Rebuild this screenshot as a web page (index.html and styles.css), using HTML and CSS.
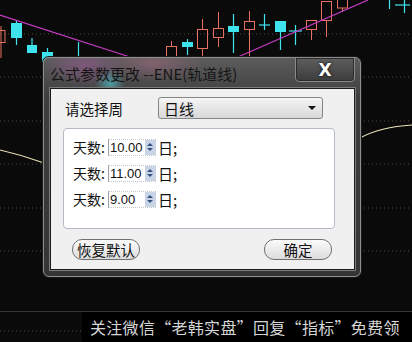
FILE: index.html
```html
<!DOCTYPE html>
<html lang="zh-CN">
<head>
  <meta charset="UTF-8">
  <title>公式参数更改</title>
  <link rel="stylesheet" href="styles.css">
</head>
<body>
  <div class="stage">
    <!-- K线背景 -->
    <svg class="chart" width="412" height="342" viewBox="0 0 412 342">
      <g class="grid">
        <line x1="0" y1="34" x2="412" y2="34"/>
        <line x1="0" y1="77" x2="412" y2="77"/>
        <line x1="0" y1="121" x2="412" y2="121"/>
        <line x1="0" y1="164" x2="412" y2="164"/>
        <line x1="0" y1="208" x2="412" y2="208"/>
        <line x1="0" y1="251" x2="412" y2="251"/>
        <line x1="0" y1="331" x2="82" y2="331"/>
      </g>
      <line x1="0" y1="311.5" x2="412" y2="311.5" stroke="#353535" stroke-width="1"/>
      <path d="M0 150 Q22 155 44 163" stroke="#e9e2b8" stroke-width="1.2" fill="none"/>
      <path d="M360 138 Q380 127 412 125" stroke="#e9e2b8" stroke-width="1.2" fill="none"/>

      <g class="up">
        <line x1="1" y1="26" x2="1" y2="58"/>
        <rect x="-5" y="30.5" width="10" height="12"/>
        <line x1="171.5" y1="41" x2="171.5" y2="46"/>
        <rect x="166.5" y="46.5" width="10" height="10"/>
        <line x1="202.5" y1="19" x2="202.5" y2="29"/>
        <line x1="202.5" y1="49" x2="202.5" y2="56"/>
        <rect x="197.5" y="29.5" width="10" height="19"/>
        <line x1="218.5" y1="12" x2="218.5" y2="28"/>
        <line x1="218.5" y1="38" x2="218.5" y2="47"/>
        <rect x="213.5" y="28.5" width="10" height="9"/>
        <line x1="249.5" y1="11" x2="249.5" y2="21"/>
        <line x1="249.5" y1="29" x2="249.5" y2="56"/>
        <rect x="244.5" y="21.5" width="10" height="8"/>
        <line x1="311.5" y1="30" x2="311.5" y2="40"/>
        <rect x="306.5" y="20.5" width="10" height="9"/>
        <line x1="326.5" y1="21" x2="326.5" y2="37"/>
        <rect x="321.5" y="1.5" width="10" height="19"/>
        <line x1="342.5" y1="8" x2="342.5" y2="12"/>
        <rect x="337.5" y="-2" width="10" height="10"/>
      </g>

      <g class="down">
        <line x1="16.5" y1="20" x2="16.5" y2="45"/>
        <rect x="11" y="23" width="11" height="15"/>
        <line x1="32" y1="38" x2="32" y2="53"/>
        <rect x="27" y="45" width="10" height="8"/>
        <line x1="47.5" y1="48" x2="47.5" y2="60"/>
        <rect x="42" y="52" width="11" height="10"/>
        <line x1="78.5" y1="42" x2="78.5" y2="56"/>
        <line x1="187.5" y1="39" x2="187.5" y2="55"/>
        <rect x="182" y="42" width="11" height="5"/>
        <line x1="233.5" y1="14" x2="233.5" y2="53"/>
        <rect x="228" y="26" width="11" height="6"/>
        <line x1="264.5" y1="14" x2="264.5" y2="30"/>
        <line x1="259" y1="25" x2="270" y2="25"/>
        <line x1="280.5" y1="21" x2="280.5" y2="50"/>
        <rect x="275" y="21" width="11" height="11"/>
        <line x1="295.5" y1="25" x2="295.5" y2="45"/>
        <line x1="289" y1="31" x2="302" y2="31"/>
        <line x1="389.5" y1="0" x2="389.5" y2="9"/>
        <line x1="404.5" y1="0" x2="404.5" y2="13"/>
        <line x1="395" y1="5" x2="410" y2="5"/>
      </g>

      <line x1="0" y1="15" x2="130" y2="57" stroke="#c83cc8" stroke-width="1.2"/>
      <line x1="238" y1="57" x2="368" y2="0" stroke="#c83cc8" stroke-width="1.2"/>
    </svg>

    <div class="dialog">
      <div class="titlebar">
        <span class="title">公式参数更改 --ENE(轨道线)</span>
        <button class="close">X</button>
      </div>

      <div class="client">
        <div class="period">
          <span class="period-label">请选择周</span>
          <div class="select">
            <span>日线</span>
            <span class="arrow"></span>
          </div>
        </div>

        <div class="params">
          <div class="param">
            <span class="param-name">天数:</span>
            <span class="num"><span class="num-val">10.00</span><span class="spin"></span></span>
            <span class="unit">日;</span>
          </div>
          <div class="param">
            <span class="param-name">天数:</span>
            <span class="num"><span class="num-val">11.00</span><span class="spin"></span></span>
            <span class="unit">日;</span>
          </div>
          <div class="param">
            <span class="param-name">天数:</span>
            <span class="num"><span class="num-val">9.00</span><span class="spin"></span></span>
            <span class="unit">日;</span>
          </div>
        </div>

        <div class="actions">
          <button class="btn">恢复默认</button>
          <button class="btn">确定</button>
        </div>
      </div>
    </div>

    <div class="watermark">关注微信“老韩实盘”回复“指标”免费领</div>
  </div>
</body>
</html>
```

FILE: styles.css
```css
body {
  margin: 0;
  background: #0a0a0a;
  font-family: "Noto Sans CJK SC", "Liberation Sans", sans-serif;
}

.stage {
  position: relative;
  width: 412px;
  height: 342px;
  overflow: hidden;
  background: #0a0a0a;
}

.chart {
  position: absolute;
  left: 0;
  top: 0;
}

.grid line {
  stroke: #4a4a4a;
  stroke-width: 1;
  stroke-dasharray: 1 3;
}

.up line, .up rect {
  stroke: #e8705e;
  stroke-width: 1;
  fill: none;
}

.down line {
  stroke: #3fe3ee;
  stroke-width: 1.2;
}

.down rect {
  fill: #3fe3ee;
}

/* 对话框 */
.dialog {
  position: absolute;
  left: 43px;
  top: 57px;
  width: 305px;
  height: 212px;
  border: 1px solid #8e8e8e;
  border-radius: 6px;
  padding: 0 5px 6px 6px;
  display: flex;
  flex-direction: column;
  background:
    radial-gradient(circle at 66px 26px, rgba(80, 210, 225, 0.6), transparent 15px),
    radial-gradient(ellipse 40px 20px at 40px 8px, rgba(200, 90, 190, 0.35), transparent),
    radial-gradient(ellipse 50px 18px at 110px 6px, rgba(220, 120, 160, 0.3), transparent),
    linear-gradient(#5c5c5c, #3e3e3e 40px, #353535);
  box-shadow: 0 0 0 1px #1a1a1a;
}

.titlebar {
  height: 30px;
  display: flex;
  align-items: flex-start;
  justify-content: space-between;
}

.title {
  margin-top: 6px;
  font-size: 15px;
  line-height: 20px;
  color: #151515;
}

.close {
  margin-top: -1px;
  width: 60px;
  height: 25px;
  padding: 0;
  border: 1px solid #8a8a8a;
  border-radius: 0 0 4px 4px;
  background: linear-gradient(#5e5e5e, #3c3c3c);
  box-shadow: inset 0 0 0 1px #2c2c2c;
  color: #fff;
  font-family: "DejaVu Sans", sans-serif;
  font-size: 17px;
  font-weight: bold;
  line-height: 22px;
  text-shadow: 0 0 3px #000;
}

.client {
  flex: 1;
  background: #f0f0f0;
  border: 1px solid #1c1c1c;
  box-shadow: 0 0 0 1px #7c7c7c;
  display: flex;
  flex-direction: column;
  padding: 8px 19px 0 12px;
}

.period {
  display: flex;
  align-items: center;
  height: 22px;
}

.period-label {
  width: 94px;
  padding-left: 2px;
  font-size: 14.5px;
  color: #111;
}

.select {
  width: 152px;
  height: 20px;
  margin-left: -1px;
  border: 1px solid #858585;
  border-radius: 3px;
  background: linear-gradient(#f6f6f6, #e6e6e6 50%, #d9d9d9);
  display: flex;
  align-items: center;
  justify-content: space-between;
  padding: 0 6px 0 5px;
  font-size: 15px;
  color: #111;
}

.arrow {
  width: 0;
  height: 0;
  border-left: 4px solid transparent;
  border-right: 4px solid transparent;
  border-top: 4px solid #111;
}

.params {
  margin-top: 9px;
  height: 94px;
  background: #fff;
  border: 1px solid #b4bac4;
  border-radius: 4px;
  padding: 5px 9px 0;
}

.param {
  display: flex;
  align-items: center;
  height: 26px;
}

.param-name {
  font-size: 14px;
  color: #111;
  width: 35px;
}

.num {
  display: flex;
  align-items: center;
  width: 47px;
  height: 15px;
  border-left: 1px solid #9aa0a8;
  border-top: 1px dotted #c4c8ce;
  border-bottom: 1px dotted #c4c8ce;
}

.num-val {
  flex: 1;
  padding-left: 1px;
  font-family: "Liberation Sans", sans-serif;
  font-size: 13px;
  color: #111;
}

.spin {
  width: 11px;
  height: 15px;
  background: #c9d5e6;
  position: relative;
}

.spin::before, .spin::after {
  content: "";
  position: absolute;
  left: 2px;
  width: 0;
  height: 0;
  border-left: 3.5px solid transparent;
  border-right: 3.5px solid transparent;
}

.spin::before {
  top: 3px;
  border-bottom: 3.5px solid #34507c;
}

.spin::after {
  top: 8px;
  border-top: 3.5px solid #34507c;
}

.unit {
  margin-left: 2px;
  font-size: 15px;
  color: #111;
}

.actions {
  display: flex;
  justify-content: space-between;
  padding: 0 3px 0 9px;
  margin-top: 10px;
}

.btn {
  width: 68px;
  height: 21px;
  padding: 0;
  border: 1px solid #707070;
  border-radius: 10px;
  background: linear-gradient(#fbfbfb, #ececec 50%, #dcdcdc);
  font-family: "Noto Sans CJK SC", sans-serif;
  font-size: 14.5px;
  line-height: 18px;
  color: #111;
}

.watermark {
  position: absolute;
  left: 82px;
  top: 312px;
  right: 0;
  bottom: 0;
  background: #000;
  padding-left: 8px;
  font-size: 16px;
  line-height: 30px;
  color: #d6d6d6;
  letter-spacing: 0.3px;
  white-space: nowrap;
}
```
